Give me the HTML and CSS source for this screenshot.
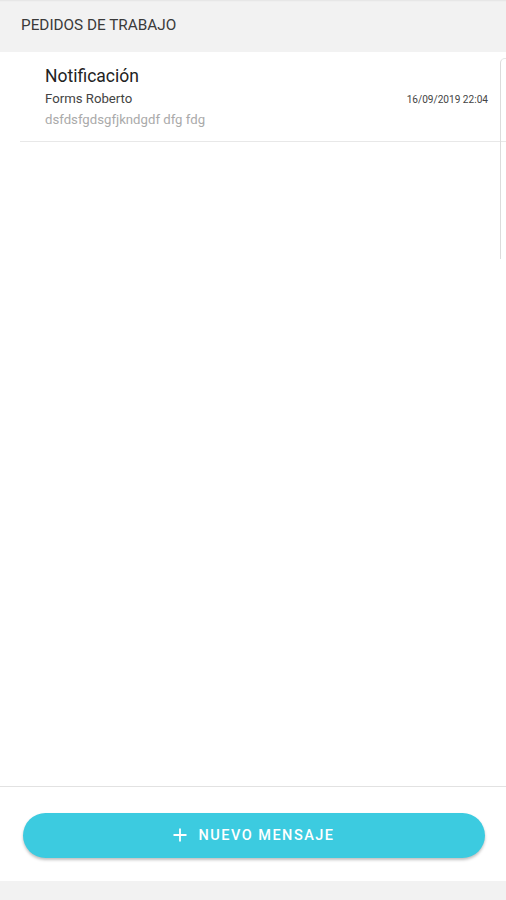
FILE: index.html
```html
<!DOCTYPE html>
<html>
<head>
    <meta charset="UTF-8">
    <title>Pedidos de trabajo</title>
    <link rel="stylesheet" href="styles.css">
</head>
<body>
<div class="app">
    <!-- Header -->
    <div class="app-header">PEDIDOS DE TRABAJO</div>

    <!-- Message list -->
    <div class="message-list">
        <div class="message-item">
            <div class="message-body">
                <div class="message-title">Notificación</div>
                <div class="message-author">Forms Roberto</div>
                <div class="message-text">dsfdsfgdsgfjkndgdf dfg fdg</div>
            </div>
            <div class="message-date">16/09/2019 22:04</div>
        </div>
        <div class="side-panel"></div>
    </div>

    <!-- Footer with action button -->
    <div class="app-footer">
        <button class="new-button" type="button">
            <svg class="new-icon" width="14" height="14" viewBox="0 0 14 14">
                <path d="M7 0.5V13.5M0.5 7H13.5" stroke="#fff" stroke-width="1.8" fill="none"/>
            </svg>
            NUEVO MENSAJE
        </button>
    </div>
    <div class="app-bottom"></div>
</div>
</body>
</html>
```

FILE: styles.css
```css
/* Body styling */
body {
    font-family: Roboto, "Liberation Sans", Arial, sans-serif;
    background-color: #fff;
    margin: 0;
    padding: 0;
}

/* Page column */
.app {
    display: flex;
    flex-direction: column;
    height: 900px;
}

/* Header */
.app-header {
    height: 52px;
    display: flex;
    align-items: center;
    padding-left: 21px;
    padding-bottom: 2px;
    box-sizing: border-box;
    background-color: #f2f2f2;
    box-shadow: inset 0 3px 2px -2px rgba(0, 0, 0, 0.06);
    color: #3a3a3a;
    font-size: 15.3px;
}

/* List */
.message-list {
    flex: 1;
    position: relative;
    background-color: #fff;
}

.message-item {
    display: flex;
    justify-content: space-between;
    margin-left: 20px;
    padding: 13px 18px 10px 25px;
    border-bottom: 1px solid #e8e8e8;
}

.message-title {
    color: #222;
    font-size: 17.5px;
    line-height: 23px;
}

.message-author {
    color: #444;
    font-size: 13.2px;
    line-height: 21px;
}

.message-text {
    color: #aaa;
    font-size: 13.2px;
    line-height: 22px;
}

.message-date {
    margin-top: 29px;
    color: #444;
    font-size: 10.1px;
}

/* Edge of the panel hidden at the right */
.side-panel {
    position: absolute;
    left: 500px;
    top: 6px;
    width: 10px;
    height: 200px;
    border-left: 1px solid #dcdcdc;
    border-top: 1px solid #e6e6e6;
    border-top-left-radius: 5px;
}

/* Footer */
.app-footer {
    height: 95px;
    padding: 26px 21px 0 23px;
    box-sizing: border-box;
    border-top: 1px solid #e2e2e2;
    background-color: #fff;
}

.new-button {
    width: 100%;
    height: 45px;
    display: flex;
    align-items: center;
    justify-content: center;
    gap: 11px;
    background-color: #3ccbe0;
    color: #fff;
    border: none;
    border-radius: 23px;
    box-shadow: 0 2px 3px rgba(0, 0, 0, 0.25);
    font-family: Roboto, "Liberation Sans", Arial, sans-serif;
    font-size: 14.5px;
    font-weight: 500;
    letter-spacing: 1.5px;
    cursor: pointer;
}

.new-icon {
    margin-bottom: 1px;
}

.app-bottom {
    height: 19px;
    background-color: #f2f2f2;
}
```
